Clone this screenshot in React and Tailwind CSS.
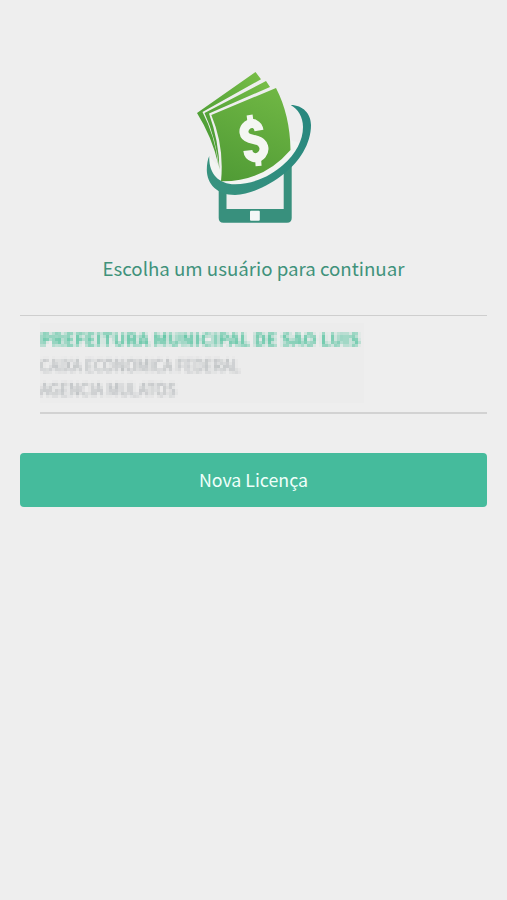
const Logo = () => (
  <svg className="w-[131px] h-[164px]" viewBox="188 64 131 164" fill="none" role="img" aria-label="Logo">
    <defs>
      <linearGradient id="bill" x1="265" y1="82" x2="222" y2="184" gradientUnits="userSpaceOnUse">
        <stop offset="0" stopColor="#70b744" />
        <stop offset="1" stopColor="#4f9a35" />
      </linearGradient>
      <linearGradient id="billBack" x1="255" y1="72" x2="197" y2="118" gradientUnits="userSpaceOnUse">
        <stop offset="0" stopColor="#76bc46" />
        <stop offset="1" stopColor="#4f9f36" />
      </linearGradient>
      <linearGradient id="ring" x1="311" y1="110" x2="210" y2="190" gradientUnits="userSpaceOnUse">
        <stop offset="0" stopColor="#27877e" />
        <stop offset="1" stopColor="#38937f" />
      </linearGradient>
    </defs>

    {/* Phone */}
    <path
      fill="#38907d"
      d="M218.7 176H226.5V209H283.7V164L291.7 155V218Q291.7 222.7 287 222.7H223.4Q218.7 222.7 218.7 218Z"
    />
    <rect x="250" y="210.8" width="9.8" height="10" rx="1" fill="#f4f7f6" />

    {/* Gap between the bills and the ring */}
    <path
      fill="#f2f4f2"
      d="M209 156C209 178 218 186 236 185C264 184 293 166 300 143L290 140L222 170Z"
    />

    {/* Ring */}
    <path
      fill="url(#ring)"
      d="M290.7 105C303 105 311 114 311 125C311 144 299 162 285 173C270 185 252 194 235 195C217 195 207 184 206.8 170C206.8 164 207.8 159 209.3 156C208.5 173 218 184 235 184.3C256 184 273 174 283 165C296 154 303 140 303 127C303 117 298 109 290.7 105Z"
    />

    {/* Bills */}
    <path fill="url(#billBack)" d="M197 113L255.5 72L261 79.3L202.5 112Q215 136 218.2 164Q212 137 197 113Z" />
    <path fill="url(#billBack)" d="M204.5 113L266 81L270 87L209 113.5Q219 141 219.5 170Q216 138 204.5 113Z" />
    <path
      fill="url(#bill)"
      d="M211.3 115L276 88Q290 115 290.5 150Q263 182 221 181.3Q224.5 146 211.3 115Z"
    />

    {/* Dollar sign */}
    <g stroke="#f4f6f2" strokeWidth="9" strokeLinejoin="round">
      <path d="M249.6 115L250.5 122M258 158L258.6 166" strokeWidth="6" />
      <path d="M259 130.5C258 124 252 121.5 247.5 125C242 129.5 243 136.5 249.5 138.3L257 140.3C264.5 142.5 265.5 150 262 154.3C257 160.5 248.5 157.5 247.8 150.5" />
    </g>
  </svg>
);

// Mosaic that masks the private text: one sample per 3px cell, grown to fill it
const MosaicFilter = () => (
  <filter id="mosaic" x="0" y="0" width="340" height="80" filterUnits="userSpaceOnUse" colorInterpolationFilters="sRGB">
    <feGaussianBlur in="SourceGraphic" stdDeviation="0.9" result="soft" />
    <feFlood x="1" y="1" width="1" height="1" floodColor="#000" result="dot" />
    <feOffset in="dot" dx="0" dy="0" x="0" y="0" width="3" height="3" result="cell" />
    <feTile in="cell" result="grid" />
    <feComposite in="soft" in2="grid" operator="in" />
    <feMorphology operator="dilate" radius="1" />
    <feGaussianBlur stdDeviation="0.7" />
  </filter>
);

const License = ({ name, bank, branch }) => (
  <div className="ml-5 h-[98px] border-b-2 border-[#d2d2d2] pt-[7px] whitespace-nowrap">
    <svg className="w-[324px] h-[80px] bg-[#ececec] overflow-visible">
      <defs>
        <MosaicFilter />
      </defs>
      <g filter="url(#mosaic)">
        <text x="0" y="22.5" textLength="320" lengthAdjust="spacingAndGlyphs" className="fill-[#5fc5a4] text-[17px] font-black">
          {name}
        </text>
        <text x="0" y="48.5" textLength="200" lengthAdjust="spacingAndGlyphs" className="fill-[#a9aeb1] text-[17px]">
          {bank}
        </text>
        <text x="0" y="72.5" textLength="136" lengthAdjust="spacingAndGlyphs" className="fill-[#a9aeb1] text-[17px]">
          {branch}
        </text>
      </g>
    </svg>
  </div>
);

const App = () => {
  return (
    <div className="min-h-screen bg-[#eeeeee] px-5 pt-16 font-['Noto_Sans_CJK_SC','Noto_Sans',sans-serif]">

      {/* Header */}
      <div className="flex flex-col items-center">
        <Logo />
        <h1 className="mt-[23px] h-[34px] text-[18.7px] leading-[33px] text-[#40927b] whitespace-nowrap">
          Escolha um usuário para continuar
        </h1>
      </div>

      {/* Licences */}
      <div className="mt-[30px] border-t border-[#cecece]">
        <License
          name="PREFEITURA MUNICIPAL DE SAO LUIS"
          bank="CAIXA ECONOMICA FEDERAL"
          branch="AGENCIA MULATOS"
        />
      </div>

      <button className="mt-[39px] h-[54px] w-full rounded-[4px] bg-[#45bb9c] pb-[2px] text-[17.8px] text-[#effffa]">
        Nova Licença
      </button>

    </div>
  );
};

export default App;
